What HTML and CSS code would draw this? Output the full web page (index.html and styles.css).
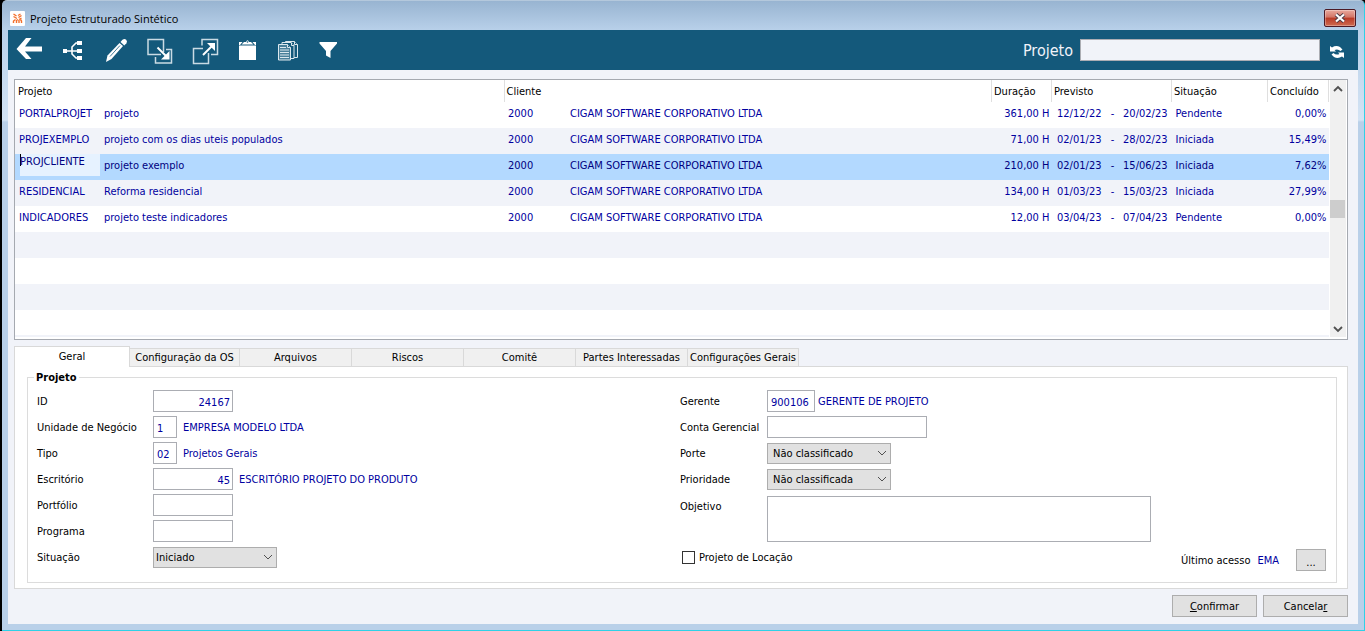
FILE: index.html
```
<!DOCTYPE html>
<html lang="pt-BR">
<head>
    <meta charset="UTF-8">
    <meta name="viewport" content="width=device-width, initial-scale=1.0">
    <title>Projeto Estruturado Sintético</title>
    <link rel="stylesheet" href="styles.css">
</head>
<body>
    <div class="window">
        <header class="titlebar">
            <svg class="app-icon" viewBox="0 0 15 15">
                <rect width="15" height="15" rx="1" fill="#fff"/>
                <g stroke="#f26f2c" stroke-width="1.4" fill="none">
                    <path d="M3.500 3l3 2M3.500 5.500l3.500 2M3.500 12v-2l2-1.500M6.500 12V9.500l1.500-1M8 4.500L10.500 3M8.500 6.500l3-2M11.500 7L9 8.500M9 9v3M10.500 8.500l1 1.500v2"/>
                </g>
            </svg>
            <h1 class="window-title">Projeto Estruturado Sintético</h1>
            <button class="close-btn" aria-label="Fechar">
                <svg viewBox="0 0 12 10" width="12" height="10">
                    <path d="M2 1.500l8 7M10 1.500l-8 7" stroke="#4b3b46" stroke-width="4"/>
                    <path d="M2 1.500l8 7M10 1.500l-8 7" stroke="#fff" stroke-width="2.200"/>
                </svg>
            </button>
        </header>

        <div class="toolbar">
            <button class="tool" aria-label="Voltar">
                <svg viewBox="0 0 44 40">
                    <path fill="#fff" d="M8.500 19L18 8h5.500l-6.500 8.500H34v5H17l6.500 7.500H18z"/>
                </svg>
            </button>
            <button class="tool" aria-label="Estrutura">
                <svg viewBox="0 0 44 40">
                    <g fill="#fff">
                        <rect x="11" y="19" width="4" height="4"/>
                        <rect x="25" y="11" width="5" height="4"/>
                        <rect x="25" y="19" width="5" height="4"/>
                        <rect x="25" y="26" width="5" height="4"/>
                    </g>
                    <path d="M15 21h10M26 13h-2l-4 4v7l4 4h2" fill="none" stroke="#fff" stroke-width="1.600"/>
                </svg>
            </button>
            <button class="tool" aria-label="Editar">
                <svg viewBox="0 0 44 40">
                    <path fill="#fff" d="M10 32l1.500-6.500L23.500 13l3.500 3L15.500 29z"/>
                    <path fill="#fff" d="M24.500 12l2-2.200q2-1.500 3.700 0 1.500 1.700.2 3.400L28.300 15.500z"/>
                    <path stroke="#14597b" stroke-width=".8" d="M14 26.500l10-11"/>
                </svg>
            </button>
            <button class="tool" aria-label="Importar">
                <svg viewBox="0 0 44 40" fill="none" stroke="#fff">
                    <path stroke-width="1.500" stroke="#c9dbe4" d="M21 24.500H8v-15h15.500V22M15.500 27v6h16V19.500H26"/>
                    <path stroke-width="2" d="M17.500 17.500l10 10"/>
                    <path fill="#fff" stroke="none" d="M29.500 21v8.500H21z"/>
                </svg>
            </button>
            <button class="tool" aria-label="Exportar">
                <svg viewBox="0 0 44 40" fill="none" stroke="#fff">
                    <path stroke-width="1.500" stroke="#c9dbe4" d="M18 15.500v-6h15.500v15H27M19 18.500H9.500v15h15V23"/>
                    <path stroke-width="2" d="M19 25l10-10"/>
                    <path fill="#fff" stroke="none" d="M23 13h8v8z"/>
                </svg>
            </button>
            <button class="tool tool-small" aria-label="Área de transferência">
                <svg viewBox="0 0 40 40">
                    <path fill="#fff" d="M11 15.500h17V30H11zM11 12h3.500L12 15H11zM28 12h-3.500l2.500 3h1zM13.500 14.500l2.500-2.500h2q1.500-3.500 3 0h2l2.500 2.500z"/>
                    <circle cx="19.500" cy="12" r=".8" fill="#14597b"/>
                </svg>
            </button>
            <button class="tool tool-small" aria-label="Documentos">
                <svg viewBox="0 0 40 40" fill="#14597b" stroke="#dce8ee">
                    <path d="M17.500 11.500h9l3 3v13h-12z"/>
                    <path d="M14 12.500h9l3 3v13H14z"/>
                    <path fill="#4a809a" d="M10.500 14.500h9l3 3v12.500h-12z"/>
                    <path d="M12 17.500h6M12 20h9M12 22.500h9M12 25h9M12 27.500h9M19.500 14.500v3h3M23.500 12.500v3h2.500M26.500 11.500v3h3"/>
                </svg>
            </button>
            <button class="tool tool-small" aria-label="Filtrar">
                <svg viewBox="0 0 40 40">
                    <path fill="#fff" d="M11.500 12H29v1.500L22.500 21v7L18 25.500V21l-6.500-7.500z"/>
                </svg>
            </button>
            <label class="search-label" for="busca">Projeto</label>
            <input class="search-input" type="text" id="busca">
            <button class="refresh-btn" aria-label="Atualizar">
                <svg viewBox="0 0 14 14" width="14" height="14">
                    <path fill="#fff" d="M0 1l2 1.500Q6 0 10 2l2.500 2.500-2 1.500Q8 3.500 4.500 5L6 6.500H0zM14 13l-2-1.500Q8 14 4 12L1.500 9.500l2-1.500Q6 10.500 9.500 9L8 7.500h6z"/>
                </svg>
            </button>
        </div>

        <main class="content">
            <div class="list-box">
                <table class="project-table">
                    <colgroup>
                        <col class="col-code">
                        <col class="col-name">
                        <col class="col-client">
                        <col>
                        <col class="col-duration">
                        <col class="col-start">
                        <col class="col-dash">
                        <col class="col-end">
                        <col class="col-status">
                        <col class="col-done">
                    </colgroup>
                    <thead>
                        <tr>
                            <th colspan="2">Projeto</th>
                            <th colspan="2">Cliente</th>
                            <th>Duração</th>
                            <th colspan="3">Previsto</th>
                            <th>Situação</th>
                            <th>Concluído</th>
                        </tr>
                    </thead>
                    <tbody>
                        <tr>
                            <td>PORTALPROJET</td><td>projeto</td><td>2000</td><td>CIGAM SOFTWARE CORPORATIVO LTDA</td>
                            <td class="num">361,00 H</td><td class="num date">12/12/22</td><td class="dash">-</td><td class="num date">20/02/23</td><td>Pendente</td><td class="num">0,00%</td>
                        </tr>
                        <tr>
                            <td>PROJEXEMPLO</td><td>projeto com os dias uteis populados</td><td>2000</td><td>CIGAM SOFTWARE CORPORATIVO LTDA</td>
                            <td class="num">71,00 H</td><td class="num date">02/01/23</td><td class="dash">-</td><td class="num date">28/02/23</td><td>Iniciada</td><td class="num">15,49%</td>
                        </tr>
                        <tr class="selected">
                            <td class="editing"><input class="cell-input" type="text" value="PROJCLIENTE" aria-label="Projeto"></td><td>projeto exemplo</td><td>2000</td><td>CIGAM SOFTWARE CORPORATIVO LTDA</td>
                            <td class="num">210,00 H</td><td class="num date">02/01/23</td><td class="dash">-</td><td class="num date">15/06/23</td><td>Iniciada</td><td class="num">7,62%</td>
                        </tr>
                        <tr>
                            <td>RESIDENCIAL</td><td>Reforma residencial</td><td>2000</td><td>CIGAM SOFTWARE CORPORATIVO LTDA</td>
                            <td class="num">134,00 H</td><td class="num date">01/03/23</td><td class="dash">-</td><td class="num date">15/03/23</td><td>Iniciada</td><td class="num">27,99%</td>
                        </tr>
                        <tr>
                            <td>INDICADORES</td><td>projeto teste indicadores</td><td>2000</td><td>CIGAM SOFTWARE CORPORATIVO LTDA</td>
                            <td class="num">12,00 H</td><td class="num date">03/04/23</td><td class="dash">-</td><td class="num date">07/04/23</td><td>Pendente</td><td class="num">0,00%</td>
                        </tr>
                        <tr><td colspan="10"></td></tr>
                        <tr><td colspan="10"></td></tr>
                        <tr><td colspan="10"></td></tr>
                        <tr><td colspan="10"></td></tr>
                    </tbody>
                </table>
                <div class="scrollbar">
                    <svg viewBox="0 0 16 18"><path d="M4 11l4-4 4 4" fill="none" stroke="#505050" stroke-width="1.800"/></svg>
                    <div class="scroll-thumb"></div>
                    <svg viewBox="0 0 16 18"><path d="M4 8l4 4 4-4" fill="none" stroke="#505050" stroke-width="1.800"/></svg>
                </div>
            </div>

            <nav class="tabs" role="tablist">
                <button class="tab active" role="tab" aria-selected="true">Geral</button>
                <button class="tab" role="tab">Configuração da OS</button>
                <button class="tab" role="tab">Arquivos</button>
                <button class="tab" role="tab">Riscos</button>
                <button class="tab" role="tab">Comitê</button>
                <button class="tab" role="tab">Partes Interessadas</button>
                <button class="tab" role="tab">Configurações Gerais</button>
            </nav>

            <section class="tab-panel">
                <fieldset class="group">
                    <legend>Projeto</legend>
                    <div class="form-left">
                        <div class="field">
                            <label for="id">ID</label>
                            <input class="w-code num" type="text" id="id" value="24167">
                        </div>
                        <div class="field">
                            <label for="unidade">Unidade de Negócio</label>
                            <input class="w-short" type="text" id="unidade" value="1">
                            <span class="description">EMPRESA MODELO LTDA</span>
                        </div>
                        <div class="field">
                            <label for="tipo">Tipo</label>
                            <input class="w-short" type="text" id="tipo" value="02">
                            <span class="description">Projetos Gerais</span>
                        </div>
                        <div class="field">
                            <label for="escritorio">Escritório</label>
                            <input class="w-code num" type="text" id="escritorio" value="45">
                            <span class="description">ESCRITÓRIO PROJETO DO PRODUTO</span>
                        </div>
                        <div class="field">
                            <label for="portfolio">Portfólio</label>
                            <input class="w-code" type="text" id="portfolio">
                        </div>
                        <div class="field">
                            <label for="programa">Programa</label>
                            <input class="w-code" type="text" id="programa">
                        </div>
                        <div class="field">
                            <label for="situacao">Situação</label>
                            <select class="tight" id="situacao"><option>Iniciado</option></select>
                        </div>
                    </div>
                    <div class="form-right">
                        <div class="field">
                            <label for="gerente">Gerente</label>
                            <input class="w-manager" type="text" id="gerente" value="900106">
                            <span class="description">GERENTE DE PROJETO</span>
                        </div>
                        <div class="field">
                            <label for="conta">Conta Gerencial</label>
                            <input class="w-account" type="text" id="conta">
                        </div>
                        <div class="field">
                            <label for="porte">Porte</label>
                            <select id="porte"><option>Não classificado</option></select>
                        </div>
                        <div class="field">
                            <label for="prioridade">Prioridade</label>
                            <select id="prioridade"><option>Não classificada</option></select>
                        </div>
                        <div class="field field-tall">
                            <label for="objetivo">Objetivo</label>
                            <textarea id="objetivo"></textarea>
                        </div>
                        <div class="field field-check">
                            <input type="checkbox" id="locacao">
                            <label for="locacao">Projeto de Locação</label>
                            <div class="last-access">
                                <span>Último acesso</span>
                                <span class="value">EMA</span>
                                <button class="more-btn">...</button>
                            </div>
                        </div>
                    </div>
                </fieldset>
            </section>

            <footer class="actions">
                <button class="btn"><u>C</u>onfirmar</button>
                <button class="btn">Cancela<u>r</u></button>
            </footer>
        </main>
    </div>
</body>
</html>
```
FILE: styles.css
```
* {
    margin: 0;
    padding: 0;
    box-sizing: border-box;
    font-family: 'DejaVu Sans Condensed', 'DejaVu Sans', Tahoma, sans-serif;
    font-size: 11px;
}

body {
    background: #000;
    color: #000;
}

.window {
    min-height: 100vh;
    display: flex;
    flex-direction: column;
    margin-left: 2px;
    padding: 0 6px 6px;
    background: linear-gradient(#98b4d1, #b9d1ea 30px, #d3e3f4 119px, #b9d0e9 121px);
    border-top: 1px solid #b4c8dc;
    border-right: 1px solid #2fd0e6;
    border-bottom: 1px solid #2fd0e6;
    border-radius: 5px 5px 0 0;
}

/* title bar */
.titlebar {
    display: flex;
    align-items: center;
    height: 29px;
    padding: 5px 2px 0;
}

.app-icon {
    width: 15px;
    height: 15px;
}

.window-title {
    margin-left: 5px;
    font-family: 'Open Sans', sans-serif;
    font-weight: normal;
}

.close-btn {
    display: flex;
    align-items: center;
    justify-content: center;
    width: 32px;
    height: 18px;
    margin-left: auto;
    border: 1px solid #4c1a25;
    border-radius: 2px;
    background: linear-gradient(#e9a99d, #d27566 45%, #b93a26 50%, #cf6b50);
    box-shadow: inset 0 0 0 1px rgba(255, 255, 255, 0.3);
}

/* toolbar */
.toolbar {
    display: flex;
    align-items: center;
    height: 40px;
    background: #14597b;
}

.tool {
    width: 44px;
    height: 40px;
    border: none;
    background: none;
}

.tool svg {
    display: block;
    width: 100%;
    height: 100%;
}

.tool-small {
    width: 40px;
}

.search-label {
    margin-left: auto;
    color: #f1f3f9;
    font-size: 16px;
}

.search-input {
    width: 240px;
    height: 22px;
    margin-left: 7px;
    padding: 0 4px;
    border: 1px solid #abadb3;
    background: #f1f3f9;
}

.refresh-btn {
    display: flex;
    width: 14px;
    height: 14px;
    margin: 4px 14px 0 10px;
    border: none;
    background: none;
}

/* content */
.content {
    flex: 1;
    display: flex;
    flex-direction: column;
    padding: 9px 10px 6px 6px;
    background: #f1f3f9;
}

.list-box {
    display: flex;
    padding-bottom: 2px;
    border: 1px solid #a5a9b0;
    background: #fff;
}

.project-table {
    flex: 1;
    width: 100%;
    table-layout: fixed;
    border-collapse: collapse;
    border-bottom: 2px solid #f1f3f9;
    color: #0000a0;
}

.col-code { width: 85px; }
.col-name { width: 404px; }
.col-client { width: 62px; }
.col-duration { width: 60px; }
.col-start { width: 54px; }
.col-dash { width: 14px; }
.col-end { width: 52px; }
.col-status { width: 96px; }
.col-done { width: 61px; }

.project-table th {
    height: 22px;
    padding-left: 2px;
    border-left: 1px solid #dfdfdf;
    color: #000;
    font-weight: normal;
    text-align: left;
}

.project-table th:first-child {
    border-left: none;
    padding-left: 3px;
}

.project-table th:last-child {
    border-right: 1px solid #dfdfdf;
}

.project-table td {
    height: 26px;
    padding: 0 0 4px 4px;
    white-space: nowrap;
}

.project-table tbody tr:nth-child(even) {
    background: #f1f3f9;
}

.project-table .selected {
    background: #b3d9ff;
    color: #000080;
}

.project-table .num {
    padding-left: 0;
    padding-right: 2px;
    text-align: right;
}

.project-table .date {
    padding-right: 4px;
}

.project-table .dash {
    padding-left: 0;
    text-align: center;
}

.project-table .editing {
    padding: 0 0 4px 5px;
}

.cell-input {
    display: block;
    width: 100%;
    height: 22px;
    padding-bottom: 8px;
    border: none;
    background: linear-gradient(#000, #000) no-repeat 0 0 / 1px 12px, #e6f2ff;
    color: #000080;
}

.scrollbar {
    display: flex;
    flex-direction: column;
    width: 16px;
    margin: 0 1px;
    background: #f0f0f0;
}

.scrollbar svg {
    width: 16px;
    height: 18px;
}

.scroll-thumb {
    height: 18px;
    margin: auto 1px auto 0;
    background: #cdcdcd;
}

/* tabs */
.tabs {
    display: flex;
    align-items: flex-end;
    margin-top: 6px;
}

.tab {
    width: 112px;
    height: 18px;
    border: 1px solid #d9d9d9;
    border-left: none;
    border-bottom: none;
    background: #f0f0f0;
    white-space: nowrap;
}

.tab:nth-child(2) {
    width: 110px;
}

.tab:last-child {
    width: 111px;
}

.tab.active {
    width: 116px;
    height: 21px;
    margin-bottom: -1px;
    padding-bottom: 2px;
    border-left: 1px solid #d9d9d9;
    background: #fff;
    z-index: 1;
}

.tab-panel {
    padding: 4px 10px 5px 12px;
    border: 1px solid #d9d9d9;
    background: #fff;
}

.group {
    display: grid;
    grid-template-columns: 643px 1fr;
    padding: 4px 10px 12px 9px;
    border: 1px solid #dcdcdc;
}

.group legend {
    padding: 0 2px;
    margin-left: -3px;
    font-weight: bold;
}

.field {
    display: flex;
    align-items: center;
    height: 26px;
}

.form-left label {
    width: 116px;
}

.form-right label {
    width: 87px;
}

.field input[type="text"],
.field textarea {
    height: 22px;
    padding: 2px 2px 0 3px;
    border: 1px solid #abadb3;
    background: #fff;
    color: #0000a0;
}

.field .num {
    padding-right: 1px;
    text-align: right;
}

.field .w-code { width: 80px; }
.field .w-short { width: 24px; }
.field .w-manager { width: 48px; }
.field .w-account { width: 160px; }

.description {
    margin-left: 6px;
    color: #0000a0;
}

.w-manager + .description {
    margin-left: 3px;
}

.field select {
    width: 124px;
    height: 21px;
    padding-left: 5px;
    border: 1px solid #adadad;
    appearance: none;
    background: #e1e1e1 url("data:image/svg+xml,%3Csvg xmlns='http://www.w3.org/2000/svg' width='10' height='6'%3E%3Cpath d='M1 1l4 4 4-4' fill='none' stroke='%23505050'/%3E%3C/svg%3E") no-repeat right 3px center;
}

.field select.tight {
    padding-left: 2px;
}

.field-tall {
    height: 52px;
    align-items: flex-start;
}

.field-tall label {
    padding-top: 8px;
}

.field textarea {
    width: 384px;
    height: 46px;
    margin-top: 4px;
    resize: none;
}

.field-check input {
    width: 13px;
    height: 13px;
    margin: 0 4px 0 2px;
    appearance: none;
    border: 1px solid #333;
    background: #fff;
}

.field-check label {
    width: auto;
}

.last-access {
    display: flex;
    align-items: center;
    gap: 7px;
    margin: 6px 0 0 auto;
}

.last-access .value {
    color: #0000a0;
}

.btn,
.more-btn {
    border: 1px solid #adadad;
    background: #e1e1e1;
}

.more-btn {
    width: 30px;
    height: 22px;
    margin-left: 10px;
    padding-top: 4px;
}

.actions {
    display: flex;
    justify-content: flex-end;
    gap: 6px;
    margin-top: 6px;
}

.btn {
    width: 85px;
    height: 22px;
}
```
